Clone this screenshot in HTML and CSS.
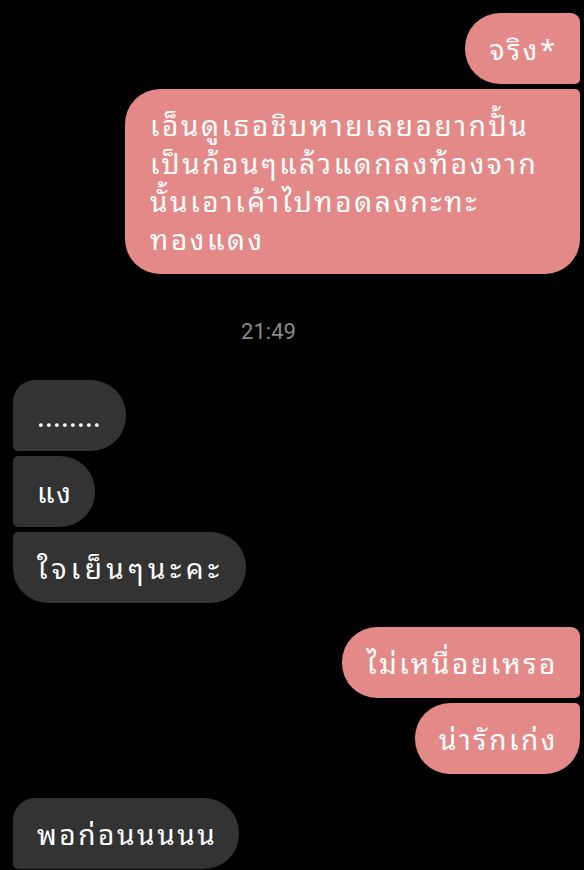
FILE: index.html
```html
<!DOCTYPE html>
<html lang="th">
<head>
  <meta charset="UTF-8">
  <meta name="viewport" content="width=device-width, initial-scale=1.0">
  <title>Chat</title>
  <link rel="stylesheet" href="styles.css">
</head>
<body>
  <div class="chat">
    <div class="group sent">
      <div class="bubble first">จริง*</div>
      <div class="bubble last wide">เอ็นดูเธอชิบหายเลยอยากปั้น<br>เป็นก้อนๆแล้วแดกลงท้องจาก<br>นั้นเอาเค้าไปทอดลงกะทะ<br>ทองแดง</div>
    </div>

    <div class="time">21:49</div>

    <div class="group received">
      <div class="bubble first dots">........</div>
      <div class="bubble">แง</div>
      <div class="bubble last loose">ใจเย็นๆนะคะ</div>
    </div>

    <div class="group sent">
      <div class="bubble first">ไม่เหนื่อยเหรอ</div>
      <div class="bubble last">น่ารักเก่ง</div>
    </div>

    <div class="group received">
      <div class="bubble first">พอก่อนนนนน</div>
    </div>
  </div>
</body>
</html>
```

FILE: styles.css
```css
body {
  margin: 0;
  padding: 0;
  background-color: #000;
  font-family: "Noto Sans Thai Looped", "Noto Sans Thai", "Noto Sans", sans-serif;
  overflow: hidden;
}
.chat {
  display: flex;
  flex-direction: column;
  padding: 13px 4px 0 13px;
}
.group {
  display: flex;
  flex-direction: column;
  gap: 5px;
  margin-top: 24px;
}
.group:first-child {
  margin-top: 0;
}
.sent {
  align-items: flex-end;
}
.received {
  align-items: flex-start;
}
.bubble {
  box-sizing: border-box;
  font-size: 28px;
  line-height: 38px;
  letter-spacing: 2.6px;
  padding: 16px 22px 17px 24px;
  color: #fff;
  max-width: 455px;
}
.bubble.dots {
  letter-spacing: 0.5px;
  padding-right: 25px;
}
.bubble.loose {
  letter-spacing: 4.4px;
}
.bubble.wide {
  width: 455px;
  padding-left: 25px;
}
.sent .bubble {
  background-color: #e38a89;
  border-radius: 35px 5px 5px 35px;
}
.sent .bubble.first {
  border-top-right-radius: 9px;
}
.sent .bubble.last {
  border-bottom-right-radius: 35px;
}
.sent .bubble.first.last {
  border-radius: 35px;
}
.received .bubble {
  background-color: #333;
  border-radius: 5px 35px 35px 5px;
}
.received .bubble.first {
  border-top-left-radius: 22px;
}
.received .bubble.last {
  border-bottom-left-radius: 35px;
}
.received .bubble.first.last {
  border-radius: 35px;
}
.time {
  font-family: Roboto, sans-serif;
  font-size: 22px;
  line-height: 26px;
  color: #8a8a8a;
  text-align: center;
  padding-right: 56px;
  margin: 45px 0 35px;
}
.time + .group {
  margin-top: 0;
}
```
